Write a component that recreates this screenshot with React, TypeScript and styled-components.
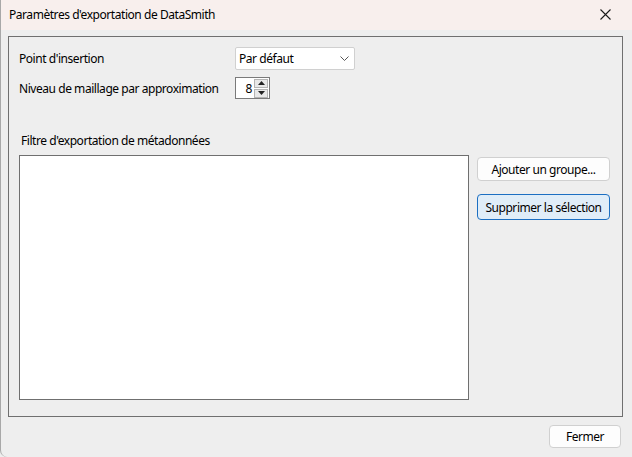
import React from "react";
import styled, { createGlobalStyle } from "styled-components";

const Global = createGlobalStyle`
  html, body { margin: 0; padding: 0; background: #eeeeee; }
  body { font-family: "Noto Sans", "Open Sans", sans-serif; font-size: 12px; color: #000; letter-spacing: -0.45px; }
  * { box-sizing: border-box; }
`;

const Window = styled.div`
  width: 632px;
  height: 457px;
  display: flex;
  flex-direction: column;
  background: #eeeeee;
  border-left: 1px solid #a8a8a8;
  border-bottom-left-radius: 7px;
  overflow: hidden;
`;

const TitleBar = styled.div`
  height: 30px;
  flex: none;
  display: flex;
  align-items: center;
  justify-content: space-between;
  background: #f8efed;
  padding: 0 0 2px 8px;
`;

const Title = styled.span`
  font-size: 12px;
`;

const CloseBtn = styled.div`
  width: 46px;
  height: 28px;
  display: flex;
  align-items: center;
  justify-content: center;
  margin-right: 4px;
`;

const Body = styled.div`
  flex: 1;
  display: flex;
  flex-direction: column;
  padding: 6px 9px 0 7px;
`;

const Group = styled.div`
  border: 1px solid #6f6f6f;
  height: 381px;
  padding: 10px 0 16px 10px;
  display: flex;
  flex-direction: column;
`;

const Row = styled.div<{ $mt?: number }>`
  display: flex;
  align-items: center;
  margin-top: ${(p) => p.$mt ?? 0}px;
`;

const Label = styled.span`
  width: 216px;
`;

const Combo = styled.div`
  width: 120px;
  height: 23px;
  background: #fff;
  border: 1px solid #d0d0d0;
  border-radius: 2px;
  display: flex;
  align-items: center;
  justify-content: space-between;
  padding: 0 5px 0 3px;
`;

const Spinner = styled.div`
  width: 35px;
  height: 22px;
  background: #fff;
  border: 1px solid #7a7a7a;
  display: flex;
  align-items: center;
  justify-content: flex-end;
  padding-right: 1px;
`;

const SpinValue = styled.span`
  padding-right: 2px;
`;

const SpinArrows = styled.div`
  display: flex;
  flex-direction: column;
  gap: 1px;
`;

const SpinArrow = styled.div`
  width: 14px;
  height: 9px;
  background: #e8e8e8;
  border: 1px solid #b4b4b4;
  display: flex;
  align-items: center;
  justify-content: center;
`;

const SectionLabel = styled.div`
  margin: 33px 0 0 2px;
`;

const FilterArea = styled.div`
  flex: 1;
  display: flex;
  gap: 8px;
  margin-top: 6px;
`;

const ListBox = styled.div`
  width: 450px;
  background: #fff;
  border: 1px solid #6f6f6f;
`;

const ButtonCol = styled.div`
  display: flex;
  flex-direction: column;
  gap: 13px;
  padding-top: 2px;
`;

const Button = styled.button<{ $primary?: boolean; $w?: number; $h?: number }>`
  font-family: inherit;
  font-size: 12px;
  letter-spacing: inherit;
  color: #000;
  width: ${(p) => p.$w ?? 133}px;
  height: ${(p) => p.$h ?? 24}px;
  background: ${(p) => (p.$primary ? "#e0edf8" : "#fdfdfd")};
  border: 1px solid ${(p) => (p.$primary ? "#1c6fc2" : "#d0d0d0")};
  border-radius: 4px;
  padding: 0;
`;

const Footer = styled.div`
  display: flex;
  justify-content: flex-end;
  padding: 8px 2px 0 0;
`;

export default function App() {
  return (
    <>
      <Global />
      <Window>
        <TitleBar>
          <Title>Paramètres d'exportation de DataSmith</Title>
          <CloseBtn>
            <svg width="11" height="11" viewBox="0 0 11 11">
              <path d="M0.5 0.5 L10.5 10.5 M10.5 0.5 L0.5 10.5" stroke="#1a1a1a" strokeWidth="1.1" fill="none" />
            </svg>
          </CloseBtn>
        </TitleBar>
        <Body>
          <Group>
            <Row>
              <Label>Point d'insertion</Label>
              <Combo>
                <span>Par défaut</span>
                <svg width="9" height="5" viewBox="0 0 9 5">
                  <path d="M0.5 0.5 L4.5 4.5 L8.5 0.5" stroke="#555" strokeWidth="1" fill="none" />
                </svg>
              </Combo>
            </Row>
            <Row $mt={7}>
              <Label>Niveau de maillage par approximation</Label>
              <Spinner>
                <SpinValue>8</SpinValue>
                <SpinArrows>
                  <SpinArrow>
                    <svg width="7" height="4" viewBox="0 0 7 4">
                      <path d="M3.5 0 L7 4 L0 4 Z" fill="#222" />
                    </svg>
                  </SpinArrow>
                  <SpinArrow>
                    <svg width="7" height="4" viewBox="0 0 7 4">
                      <path d="M0 0 L7 0 L3.5 4 Z" fill="#222" />
                    </svg>
                  </SpinArrow>
                </SpinArrows>
              </Spinner>
            </Row>
            <SectionLabel>Filtre d'exportation de métadonnées</SectionLabel>
            <FilterArea>
              <ListBox />
              <ButtonCol>
                <Button>Ajouter un groupe...</Button>
                <Button $primary $h={26}>Supprimer la sélection</Button>
              </ButtonCol>
            </FilterArea>
          </Group>
          <Footer>
            <Button $w={72} $h={23}>Fermer</Button>
          </Footer>
        </Body>
      </Window>
    </>
  );
}
